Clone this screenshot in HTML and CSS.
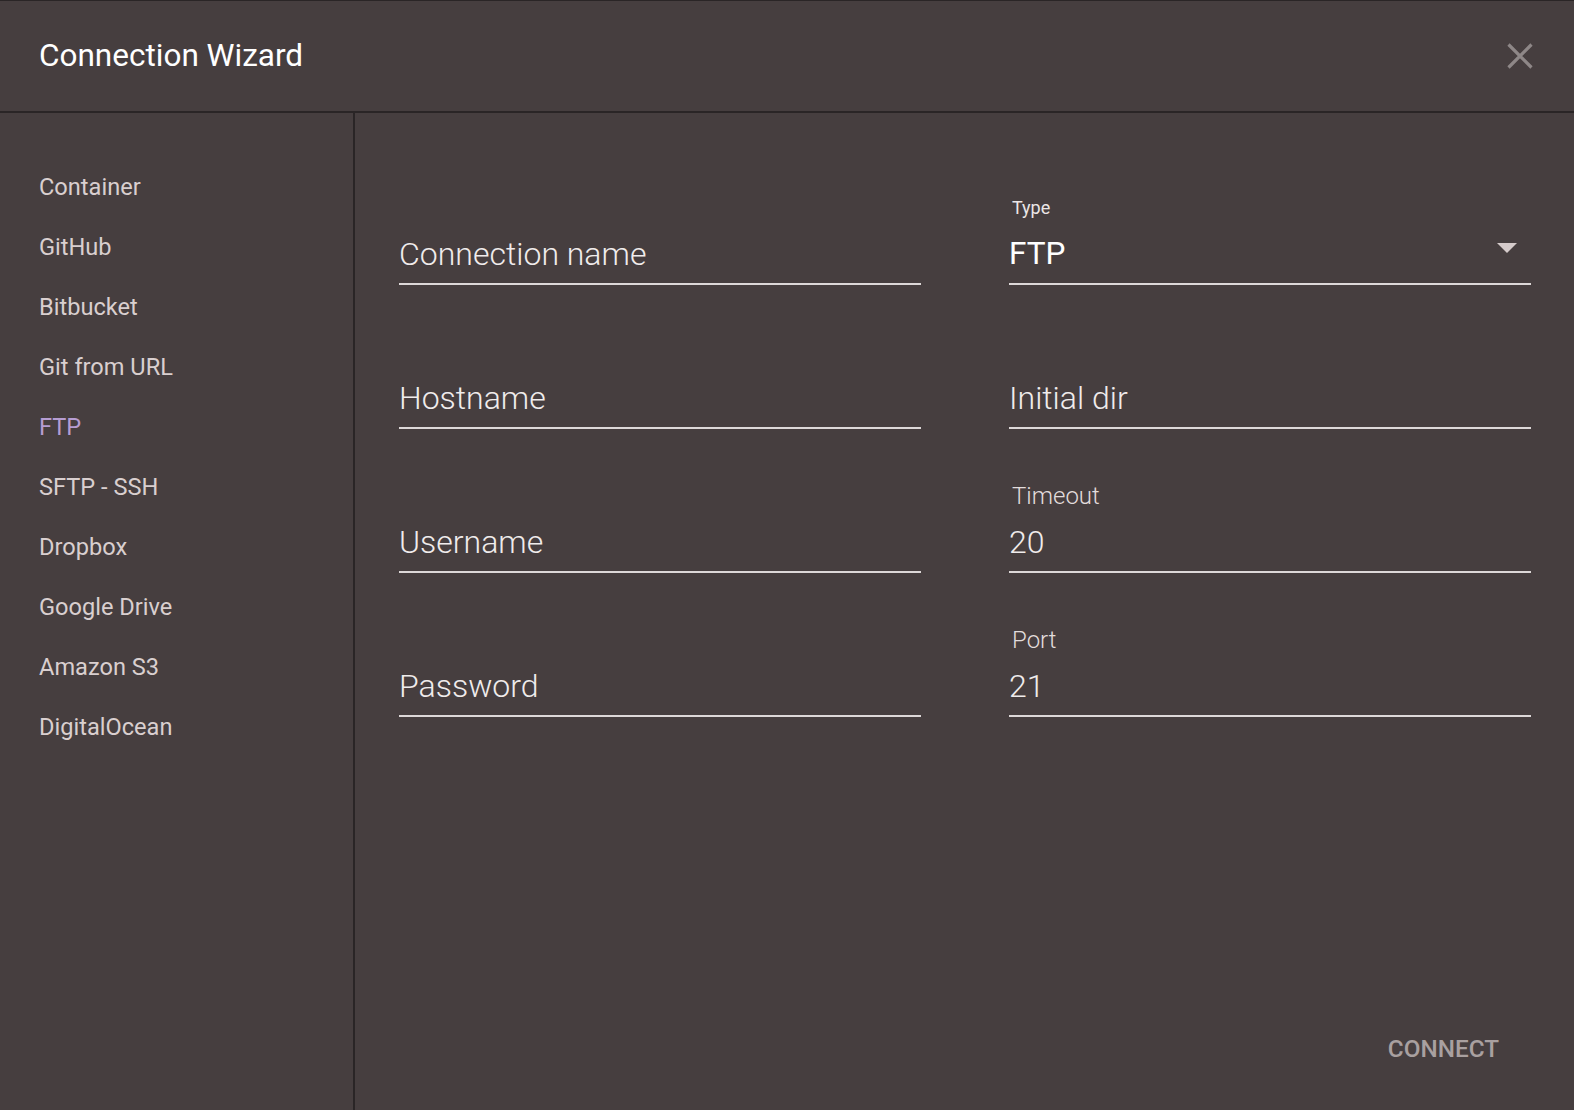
FILE: index.html
```html
<!DOCTYPE html>
<html lang="en">
<head>
<meta charset="utf-8">
<title>Connection Wizard</title>
<link rel="stylesheet" href="styles.css">
</head>
<body>
<div class="dialog">
  <header class="header">
    <h1 class="title">Connection Wizard</h1>
    <button class="close" aria-label="Close">
      <svg width="26" height="26" viewBox="0 0 26 26"><path d="M1.5 1.5 L24.5 24.5 M24.5 1.5 L1.5 24.5" stroke="#8e8787" stroke-width="3.2" fill="none"/></svg>
    </button>
  </header>
  <div class="body">
    <nav class="sidebar">
      <div class="nav-item">Container</div>
      <div class="nav-item">GitHub</div>
      <div class="nav-item">Bitbucket</div>
      <div class="nav-item">Git from URL</div>
      <div class="nav-item active">FTP</div>
      <div class="nav-item">SFTP - SSH</div>
      <div class="nav-item">Dropbox</div>
      <div class="nav-item">Google Drive</div>
      <div class="nav-item">Amazon S3</div>
      <div class="nav-item">DigitalOcean</div>
    </nav>
    <main class="main">
      <div class="form">
        <div class="field">
          <div class="input">Connection name</div>
        </div>
        <div class="field">
          <div class="label small">Type</div>
          <div class="input select">FTP
            <svg class="arrow" width="20" height="10" viewBox="0 0 20 10"><path d="M0 0 L20 0 L10 10 Z" fill="#d5cbcb"/></svg>
          </div>
        </div>
        <div class="field">
          <div class="input">Hostname</div>
        </div>
        <div class="field">
          <div class="input">Initial dir</div>
        </div>
        <div class="field">
          <div class="input">Username</div>
        </div>
        <div class="field">
          <div class="label">Timeout</div>
          <div class="input">20</div>
        </div>
        <div class="field">
          <div class="input">Password</div>
        </div>
        <div class="field">
          <div class="label">Port</div>
          <div class="input">21</div>
        </div>
      </div>
      <div class="footer">
        <button class="connect">CONNECT</button>
      </div>
    </main>
  </div>
</div>
</body>
</html>
```

FILE: styles.css
```css
html, body {
  margin: 0;
  padding: 0;
  height: 100%;
}
body {
  background: #463e3f;
  font-family: Roboto, "Noto Sans", sans-serif;
  color: #ffffff;
}
.dialog {
  display: flex;
  flex-direction: column;
  min-height: 1110px;
  box-sizing: border-box;
  border-top: 1px solid #2a2526;
}
.header {
  height: 110px;
  border-bottom: 2px solid #2a2526;
  display: flex;
  align-items: center;
  justify-content: space-between;
  padding: 0 41px 0 39px;
}
.title {
  margin: 0;
  font-size: 31.5px;
  font-weight: 400;
  line-height: 110px;
  color: #ffffff;
}
.close {
  background: none;
  border: none;
  padding: 0;
  width: 26px;
  height: 26px;
  display: flex;
}
.body {
  flex: 1;
  display: flex;
}
.sidebar {
  width: 353px;
  border-right: 2px solid #2a2526;
  padding-top: 44px;
  box-sizing: content-box;
}
.nav-item {
  padding-left: 39px;
  font-size: 23.6px;
  line-height: 60px;
  color: #d9cfcf;
}
.nav-item.active {
  color: #b69dd2;
}
.main {
  flex: 1;
  display: flex;
  flex-direction: column;
}
.form {
  display: grid;
  grid-template-columns: 522px 522px;
  column-gap: 88px;
  grid-auto-rows: 100px;
  row-gap: 44px;
  padding: 72px 0 0 44px;
}
.field {
  display: flex;
  flex-direction: column;
  justify-content: flex-end;
}
.label {
  font-family: "Roboto Light", Roboto, sans-serif;
  font-size: 24px;
  font-weight: 300;
  line-height: 28px;
  color: #e2dcdc;
  padding-left: 3px;
  margin-bottom: 12px;
}
.label.small {
  font-family: Roboto, sans-serif;
  font-size: 18px;
  font-weight: 400;
  line-height: 20px;
  margin-bottom: 16px;
  color: #ebe6e6;
}
.input {
  font-family: "Roboto Light", Roboto, sans-serif;
  font-size: 32px;
  font-weight: 300;
  line-height: 40px;
  height: 40px;
  padding-bottom: 9px;
  border-bottom: 2px solid #ddd8d8;
  color: #f0ecec;
  position: relative;
}
.input.select {
  font-family: Roboto, sans-serif;
  font-size: 31.5px;
  font-weight: 400;
  color: #ffffff;
}
.arrow {
  position: absolute;
  right: 14px;
  top: 9px;
}
.footer {
  margin-top: auto;
  display: flex;
  justify-content: flex-end;
  padding: 0 75px 43px 0;
}
.connect {
  background: none;
  border: none;
  padding: 0;
  font-family: Roboto, "Noto Sans", sans-serif;
  font-size: 24.3px;
  font-weight: 500;
  line-height: 36px;
  color: #a9a0a0;
}
```
